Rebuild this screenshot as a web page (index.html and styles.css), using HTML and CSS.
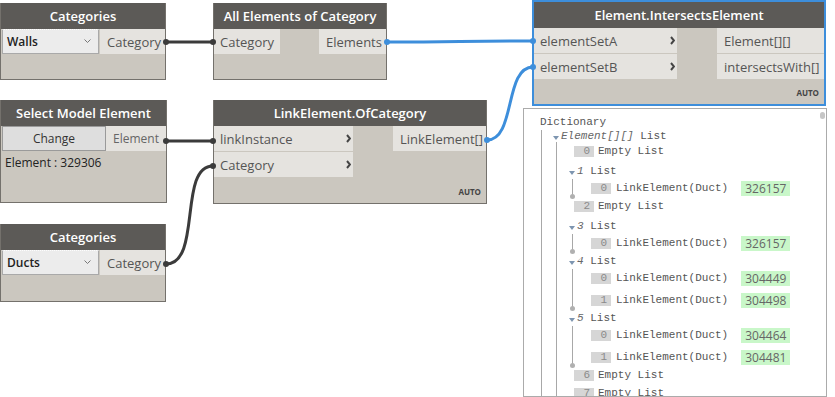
FILE: index.html
```html
<!DOCTYPE html>
<html lang="en">
<head>
  <meta charset="UTF-8">
  <meta name="viewport" content="width=device-width, initial-scale=1.0">
  <title>Dynamo - Intersects Element</title>
  <link rel="stylesheet" href="styles.css">
</head>
<body>
  <div class="canvas">

    <!-- nodes -->
    <div class="node n-walls">
      <div class="node-title">Categories</div>
      <div class="node-ports">
        <div class="dropdown"><span>Walls</span><svg width="7" height="5" viewBox="0 0 7 5"><polyline points="0.5,0.5 3.5,3.5 6.5,0.5" fill="none" stroke="#777" stroke-width="1"/></svg></div>
        <div class="port-col">
          <div class="port out">Category</div>
        </div>
      </div>
    </div>

    <div class="node n-all">
      <div class="node-title">All Elements of Category</div>
      <div class="node-ports">
        <div class="port-col inputs">
          <div class="port in">Category</div>
        </div>
        <div class="port-col outputs">
          <div class="port out">Elements</div>
        </div>
      </div>
    </div>

    <div class="node n-inter">
      <div class="node-title">Element.IntersectsElement</div>
      <div class="node-ports">
        <div class="port-col inputs">
          <div class="port in">elementSetA <svg width="5" height="9" viewBox="0 0 5 9"><polyline points="1,1 4,4.5 1,8" fill="none" stroke="#444" stroke-width="2"/></svg></div>
          <div class="port in">elementSetB <svg width="5" height="9" viewBox="0 0 5 9"><polyline points="1,1 4,4.5 1,8" fill="none" stroke="#444" stroke-width="2"/></svg></div>
        </div>
        <div class="port-col outputs">
          <div class="port out">Element[][]</div>
          <div class="port out">intersectsWith[]</div>
        </div>
      </div>
      <div class="node-foot">AUTO</div>
    </div>

    <div class="node n-select">
      <div class="node-title">Select Model Element</div>
      <div class="node-ports">
        <div class="btn">Change</div>
        <div class="port-col outputs">
          <div class="port out small">Element</div>
        </div>
      </div>
      <div class="node-info">Element : 329306</div>
    </div>

    <div class="node n-link">
      <div class="node-title">LinkElement.OfCategory</div>
      <div class="node-ports">
        <div class="port-col inputs">
          <div class="port in">linkInstance <svg width="5" height="9" viewBox="0 0 5 9"><polyline points="1,1 4,4.5 1,8" fill="none" stroke="#444" stroke-width="2"/></svg></div>
          <div class="port in">Category <svg width="5" height="9" viewBox="0 0 5 9"><polyline points="1,1 4,4.5 1,8" fill="none" stroke="#444" stroke-width="2"/></svg></div>
        </div>
        <div class="port-col outputs">
          <div class="port out">LinkElement[]</div>
        </div>
      </div>
      <div class="node-foot">AUTO</div>
    </div>

    <div class="node n-ducts">
      <div class="node-title">Categories</div>
      <div class="node-ports">
        <div class="dropdown"><span>Ducts</span><svg width="7" height="5" viewBox="0 0 7 5"><polyline points="0.5,0.5 3.5,3.5 6.5,0.5" fill="none" stroke="#777" stroke-width="1"/></svg></div>
        <div class="port-col">
          <div class="port out">Category</div>
        </div>
      </div>
    </div>

    <!-- watch preview -->
    <div class="watch">
      <div class="thumb"></div>
      <div class="w-row w-dict">Dictionary</div>
      <div class="lvl1">
        <div class="w-row w-root"><i class="tri"></i><em>Element[][]</em>&nbsp;List</div>
        <div class="lvl2">
          <div class="w-row empty"><span class="idx">0</span>Empty List</div>

          <div class="list">
            <div class="w-row w-head"><i class="tri"></i><em>1</em>&nbsp;List</div>
            <div class="sub">
              <div class="w-row leaf"><span class="idx">0</span>LinkElement(Duct)<span class="val">326157</span></div>
            </div>
          </div>

          <div class="w-row empty"><span class="idx">2</span>Empty List</div>

          <div class="list">
            <div class="w-row w-head"><i class="tri"></i><em>3</em>&nbsp;List</div>
            <div class="sub">
              <div class="w-row leaf"><span class="idx">0</span>LinkElement(Duct)<span class="val">326157</span></div>
            </div>
          </div>

          <div class="list">
            <div class="w-row w-head"><i class="tri"></i><em>4</em>&nbsp;List</div>
            <div class="sub">
              <div class="w-row leaf"><span class="idx">0</span>LinkElement(Duct)<span class="val">304449</span></div>
              <div class="w-row leaf"><span class="idx">1</span>LinkElement(Duct)<span class="val">304498</span></div>
            </div>
          </div>

          <div class="list">
            <div class="w-row w-head"><i class="tri"></i><em>5</em>&nbsp;List</div>
            <div class="sub">
              <div class="w-row leaf"><span class="idx">0</span>LinkElement(Duct)<span class="val">304464</span></div>
              <div class="w-row leaf"><span class="idx">1</span>LinkElement(Duct)<span class="val">304481</span></div>
            </div>
          </div>

          <div class="w-row empty"><span class="idx">6</span>Empty List</div>
          <div class="w-row empty"><span class="idx">7</span>Empty List</div>
        </div>
      </div>
    </div>

    <!-- wires -->
    <svg class="wires" width="835" height="397" viewBox="0 0 835 397">
      <g fill="none" stroke-width="3">
        <path d="M166,42 L213,42" stroke="#3b3b3b"/>
        <path d="M166,141 L213,141" stroke="#3b3b3b"/>
        <path d="M166,264 C202,264 178,166 213,166" stroke="#3b3b3b"/>
        <path d="M387,42 C460,42 460,41 533,41" stroke="#3d8edb"/>
        <path d="M487,140 C516,140 504,67 533,67" stroke="#3d8edb"/>
      </g>
      <g fill="#3b3b3b">
        <circle cx="166" cy="42" r="3"/>
        <circle cx="213" cy="42" r="3"/>
        <circle cx="166" cy="141" r="3"/>
        <circle cx="213" cy="141" r="3"/>
        <circle cx="166" cy="264" r="3"/>
        <circle cx="213" cy="166" r="3"/>
      </g>
      <g fill="#3d8edb">
        <circle cx="387" cy="42" r="3"/>
        <circle cx="533" cy="41" r="3"/>
        <circle cx="487" cy="140" r="3"/>
        <circle cx="533" cy="67" r="3"/>
      </g>
    </svg>
  </div>
</body>
</html>
```

FILE: styles.css
```css
body {
  margin: 0;
  background-color: #fff;
  font-family: 'Open Sans', 'Liberation Sans', sans-serif;
}
.canvas {
  position: relative;
  width: 835px;
  height: 397px;
  overflow: hidden;
}
.wires {
  position: absolute;
  left: 0;
  top: 0;
  pointer-events: none;
}

/* nodes */
.node {
  position: absolute;
  box-sizing: border-box;
  display: flex;
  flex-direction: column;
  background-color: #cbc7bf;
  border: 1px solid #74716c;
  border-top: none;
}
.node-title {
  flex: none;
  height: 26px;
  display: flex;
  align-items: center;
  justify-content: center;
  background-color: #5c5a57;
  color: #fff;
  font-size: 13px;
  font-weight: 600;
}
.node-ports {
  display: flex;
  justify-content: space-between;
  align-items: flex-start;
}
.port-col {
  display: flex;
  flex-direction: column;
  gap: 1px;
}
.port {
  box-sizing: border-box;
  height: 25px;
  display: flex;
  align-items: center;
  background-color: #e5e3df;
  color: #555;
  font-size: 13px;
  white-space: nowrap;
}
.port.in {
  justify-content: space-between;
  padding: 0 2px 0 6px;
}
.port.out {
  padding: 0 5px 0 7px;
}
.port.small {
  font-size: 12px;
  color: #666;
}
.node-foot {
  margin-top: auto;
  align-self: flex-end;
  padding: 0 5px 6px 0;
  font-size: 8px;
  font-weight: 700;
  line-height: 10px;
  color: #444;
}
.dropdown {
  box-sizing: border-box;
  width: 97px;
  height: 25px;
  margin-left: 1px;
  display: flex;
  align-items: center;
  justify-content: space-between;
  padding: 0 7px 0 4px;
  background-color: #ececec;
  border: 1px solid #a9a9a9;
  border-top: 1px dotted #fdfdfd;
  font-size: 12px;
  font-weight: 600;
  color: #222;
}
.btn {
  box-sizing: border-box;
  width: 104px;
  height: 25px;
  margin-left: 1px;
  display: flex;
  align-items: center;
  justify-content: center;
  background-color: #dedede;
  border: 1px solid #9a9a9a;
  font-size: 12px;
  color: #333;
}
.node-info {
  margin: 4px 0 0 4px;
  font-size: 12px;
  line-height: 16px;
  color: #222;
}

/* node placement on the canvas */
.n-walls { left: 0; top: 3px; width: 166px; height: 77px; }
.n-walls .port-col { width: 65px; }
.n-all { left: 213px; top: 3px; width: 174px; height: 77px; }
.n-all .inputs { width: 66px; }
.n-all .outputs { width: 67px; }
.n-inter {
  left: 532px;
  top: 0;
  width: 294px;
  height: 106px;
  border: 2px solid #3d8edb;
}
.n-inter .inputs { width: 143px; }
.n-inter .outputs { width: 107px; }
.n-select { left: 0; top: 100px; width: 167px; height: 103px; }
.n-select .outputs { width: 60px; }
.n-link { left: 213px; top: 100px; width: 274px; height: 104px; }
.n-link .inputs { width: 139px; }
.n-link .outputs { width: 93px; }
.n-ducts { left: 0; top: 224px; width: 166px; height: 78px; }
.n-ducts .port-col { width: 65px; }

/* watch preview */
.watch {
  position: absolute;
  left: 523px;
  top: 108px;
  width: 304px;
  height: 289px;
  box-sizing: border-box;
  padding: 5px 0 0 16px;
  background-color: #fff;
  border: 1px solid #ababab;
  overflow: hidden;
  font-family: 'Liberation Mono', 'DejaVu Sans Mono', monospace;
  font-size: 11px;
  color: #555;
}
.thumb {
  position: absolute;
  right: 1px;
  top: 3px;
  width: 5px;
  height: 7px;
  border-radius: 3px;
  background-color: #c6c6c6;
}
.w-row {
  display: flex;
  align-items: center;
  white-space: nowrap;
}
.w-row em {
  color: #666;
}
.w-dict { height: 16px; }
.lvl1 {
  margin-left: 1px;
  border-left: 1px solid #a8a8a8;
}
.w-root {
  height: 12px;
  padding-left: 11px;
}
.tri {
  width: 0;
  height: 0;
  margin: 4px 2px 0 0;
  border-left: 3px solid transparent;
  border-right: 3px solid transparent;
  border-top: 4px solid #7d95b0;
}
.lvl2 {
  margin-left: 14px;
  border-left: 1px solid #a8a8a8;
}
.empty {
  height: 18px;
  padding-left: 17px;
}
.empty + .list {
  margin-top: 2px;
}
.w-head {
  height: 17px;
  padding-left: 12px;
}
.sub {
  position: relative;
  margin-left: 15px;
  border-left: 1px solid #a8a8a8;
}
.sub::after {
  content: '';
  position: absolute;
  left: -3px;
  bottom: -2px;
  width: 5px;
  height: 5px;
  border-radius: 50%;
  background-color: #b0b0b0;
}
.leaf {
  height: 18px;
  padding-left: 18px;
}
.leaf + .leaf {
  margin-top: 4px;
}
.idx {
  box-sizing: border-box;
  width: 20px;
  height: 11px;
  margin-right: 4px;
  padding-right: 4px;
  background-color: #d6d6d6;
  color: #8a8a8a;
  text-align: right;
  line-height: 11px;
}
.leaf .idx {
  margin-right: 5px;
}
.val {
  height: 15px;
  margin-left: 13px;
  padding: 0 4px;
  background-color: #c9f7c9;
  font-family: 'Open Sans', 'Liberation Sans', sans-serif;
  font-size: 12px;
  line-height: 15px;
  color: #666;
}
```
